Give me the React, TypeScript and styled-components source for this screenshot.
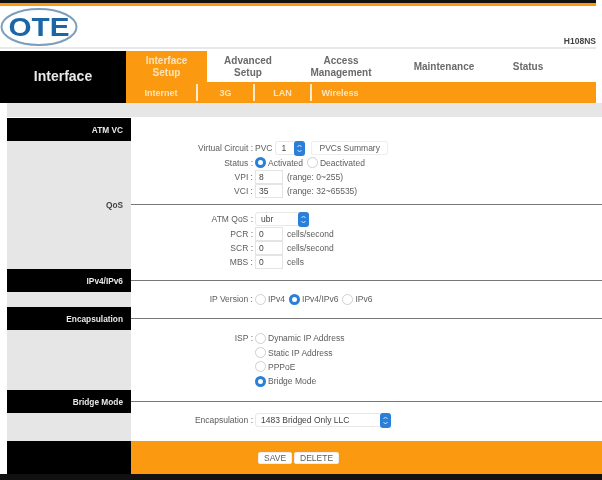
import styled, { createGlobalStyle } from "styled-components";

const GlobalStyle = createGlobalStyle`
  html, body {
    margin: 0;
    padding: 0;
    background: #fff;
  }
`;

const Page = styled.div`
  width: 602px;
  height: 480px;
  overflow: hidden;
  display: flex;
  flex-direction: column;
  font-family: "Liberation Sans", Arial, sans-serif;
  font-size: 8.5px;
  color: #5c5c5c;
  background: #fff;
  filter: blur(0.7px);
`;

const TopStrip = styled.div`
  width: 596px;
  height: 3px;
  background: #111;
  border-bottom: 3px solid #fb9a10;
`;

const Header = styled.div`
  height: 41px;
  display: flex;
  align-items: flex-end;
  justify-content: space-between;
  width: 596px;
  border-bottom: 2px solid #e8e8e8;
`;

const Logo = styled.svg`
  display: block;
  width: 80px;
  height: 40px;
`;

const Model = styled.div`
  font-size: 8.5px;
  font-weight: bold;
  color: #444;
  padding-bottom: 1px;
`;

const Nav = styled.div`
  margin-top: 2px;
  width: 596px;
  height: 52px;
  display: grid;
  grid-template-columns: 126px 1fr;
`;

const NavTitle = styled.div`
  background: #000;
  color: #e8e8e8;
  font-size: 14px;
  font-weight: bold;
  display: flex;
  align-items: center;
  justify-content: center;
  padding-bottom: 2px;
`;

const NavRight = styled.div`
  display: flex;
  flex-direction: column;
`;

const Tabs = styled.div`
  height: 31px;
  display: flex;
`;

const Tab = styled.div<{ $width: number; $active?: boolean }>`
  width: ${(p) => p.$width}px;
  display: flex;
  align-items: center;
  justify-content: center;
  text-align: center;
  line-height: 12px;
  font-size: 10px;
  font-weight: bold;
  color: ${(p) => (p.$active ? "#fde3bb" : "#6a6a6a")};
  background: ${(p) => (p.$active ? "#fb9a10" : "transparent")};
`;

const SubBar = styled.div`
  height: 21px;
  background: #fb9a10;
  display: flex;
  align-items: center;
`;

const SubItem = styled.div<{ $width: number; $sep?: boolean }>`
  box-sizing: border-box;
  width: ${(p) => p.$width}px;
  height: 17px;
  display: flex;
  align-items: center;
  justify-content: center;
  font-size: 9px;
  font-weight: bold;
  color: #fde3bb;
  border-right: ${(p) => (p.$sep ? "2px solid #fde9cc" : "none")};
`;

const GreyStrip = styled.div`
  height: 14px;
  background: #e6e6e6;
  margin-left: 7px;
  margin-bottom: 1px;
`;

const Main = styled.div`
  margin-left: 7px;
  display: flex;
  flex-direction: column;
`;

const Row = styled.div<{ $height: number }>`
  height: ${(p) => p.$height}px;
  display: grid;
  grid-template-columns: 124px 1fr;
`;

const SideHead = styled.div`
  background: #000;
  color: #e8e8e8;
  font-size: 8.3px;
  font-weight: bold;
  display: flex;
  align-items: center;
  justify-content: flex-end;
  padding-right: 8px;
`;

const SideGrey = styled(SideHead)`
  background: #e6e6e6;
  color: #444;
`;

const Rule = styled.div`
  display: flex;
  align-items: center;

  &::after {
    content: "";
    display: block;
    width: 100%;
    height: 1px;
    background: #777;
  }
`;

const Fields = styled.div<{ $top: number }>`
  padding-top: ${(p) => p.$top}px;
  display: flex;
  flex-direction: column;
`;

const Field = styled.div`
  height: 14.4px;
  display: grid;
  grid-template-columns: 124px 1fr;
  align-items: center;
  white-space: nowrap;
`;

const Label = styled.div`
  text-align: right;
  padding-right: 2px;
`;

const Value = styled.div`
  display: flex;
  align-items: center;
  gap: 3px;
`;

const Radio = styled.span<{ $on?: boolean }>`
  box-sizing: border-box;
  width: 11px;
  height: 11px;
  border-radius: 50%;
  flex: none;
  background: #fff;
  border: ${(p) => (p.$on ? "3.5px solid #2a7fd8" : "1px solid #d0d0d0")};
`;

const TextBox = styled.span`
  box-sizing: border-box;
  width: 28px;
  height: 14px;
  border: 1px solid #e4e4e4;
  padding-left: 3px;
  display: flex;
  align-items: center;
  margin-right: 1px;
  color: #444;
`;

const Select = styled.span<{ $width: number }>`
  box-sizing: border-box;
  width: ${(p) => p.$width}px;
  height: 14px;
  border: 1px solid #e8e8e8;
  border-radius: 3px;
  padding-left: 5px;
  display: flex;
  align-items: center;
  justify-content: space-between;
  color: #444;
  background: #fff;
`;

const Stepper = styled.svg`
  display: block;
  flex: none;
  width: 11px;
  height: 15px;
  margin-right: -1px;
`;

const Button = styled.span`
  box-sizing: border-box;
  height: 12px;
  padding: 0 5px;
  border-radius: 2px;
  background: #fff;
  border: 1px solid #eee;
  display: inline-flex;
  align-items: center;
  color: #5c5c5c;
  font-size: 8.5px;
`;

const SummaryButton = styled(Button)`
  height: 14px;
  margin-left: 3px;
  padding: 0 7px;
`;

const RadioGroup = styled.span`
  display: flex;
  align-items: center;
  gap: 2px;
  margin-right: 1px;
`;

const Footer = styled.div`
  height: 33px;
  display: grid;
  grid-template-columns: 124px 1fr;
`;

const FooterBar = styled.div`
  background: #fb9a10;
  display: flex;
  align-items: center;
  gap: 2px;
  padding-left: 127px;
`;

const BottomStrip = styled.div`
  flex: 1;
  background: #111;
`;

function Arrows() {
  return (
    <Stepper viewBox="0 0 11 15">
      <rect width="11" height="15" rx="3" fill="#2a7fd8" />
      <path d="M3.5 6 5.5 4 7.5 6M3.5 9 5.5 11 7.5 9" fill="none" stroke="#d8e9fb" strokeWidth="1" />
    </Stepper>
  );
}

export default function App() {
  return (
    <Page>
      <GlobalStyle />
      <TopStrip />
      <Header>
        <Logo viewBox="0 0 80 40">
          <ellipse cx="39" cy="20" rx="37.5" ry="18" fill="#fff" stroke="#7d9fbd" strokeWidth="2" />
          <text
            x="39"
            y="29"
            textAnchor="middle"
            fontFamily="Liberation Sans"
            fontWeight="bold"
            fontSize="25"
            fill="#1b66a6"
            textLength="61"
            lengthAdjust="spacingAndGlyphs"
          >
            OTE
          </text>
        </Logo>
        <Model>H108NS</Model>
      </Header>
      <Nav>
        <NavTitle>Interface</NavTitle>
        <NavRight>
          <Tabs>
            <Tab $width={81} $active>Interface<br />Setup</Tab>
            <Tab $width={82}>Advanced<br />Setup</Tab>
            <Tab $width={104}>Access<br />Management</Tab>
            <Tab $width={102}>Maintenance</Tab>
            <Tab $width={66}>Status</Tab>
          </Tabs>
          <SubBar>
            <SubItem $width={72} $sep>Internet</SubItem>
            <SubItem $width={57} $sep>3G</SubItem>
            <SubItem $width={57} $sep>LAN</SubItem>
            <SubItem $width={56}>Wireless</SubItem>
          </SubBar>
        </NavRight>
      </Nav>
      <GreyStrip />
      <Main>
        <Row $height={23}>
          <SideHead>ATM VC</SideHead>
          <div />
        </Row>
        <Row $height={56}>
          <SideGrey />
          <Fields $top={0}>
            <Field>
              <Label>Virtual Circuit :</Label>
              <Value>
                PVC
                <Select $width={30}>1<Arrows /></Select>
                <SummaryButton>PVCs Summary</SummaryButton>
              </Value>
            </Field>
            <Field>
              <Label>Status :</Label>
              <Value>
                <RadioGroup><Radio $on />Activated</RadioGroup>
                <RadioGroup><Radio />Deactivated</RadioGroup>
              </Value>
            </Field>
            <Field>
              <Label>VPI :</Label>
              <Value><TextBox>8</TextBox>(range: 0~255)</Value>
            </Field>
            <Field>
              <Label>VCI :</Label>
              <Value><TextBox>35</TextBox>(range: 32~65535)</Value>
            </Field>
          </Fields>
        </Row>
        <Row $height={15}>
          <SideGrey>QoS</SideGrey>
          <Rule />
        </Row>
        <Row $height={57}>
          <SideGrey />
          <Fields $top={0}>
            <Field>
              <Label>ATM QoS :</Label>
              <Value><Select $width={54}>ubr<Arrows /></Select></Value>
            </Field>
            <Field>
              <Label>PCR :</Label>
              <Value><TextBox>0</TextBox>cells/second</Value>
            </Field>
            <Field>
              <Label>SCR :</Label>
              <Value><TextBox>0</TextBox>cells/second</Value>
            </Field>
            <Field>
              <Label>MBS :</Label>
              <Value><TextBox>0</TextBox>cells</Value>
            </Field>
          </Fields>
        </Row>
        <Row $height={23}>
          <SideHead>IPv4/IPv6</SideHead>
          <Rule />
        </Row>
        <Row $height={15}>
          <SideGrey />
          <Fields $top={0}>
            <Field>
              <Label>IP Version :</Label>
              <Value>
                <RadioGroup><Radio />IPv4</RadioGroup>
                <RadioGroup><Radio $on />IPv4/IPv6</RadioGroup>
                <RadioGroup><Radio />IPv6</RadioGroup>
              </Value>
            </Field>
          </Fields>
        </Row>
        <Row $height={23}>
          <SideHead>Encapsulation</SideHead>
          <Rule />
        </Row>
        <Row $height={60}>
          <SideGrey />
          <Fields $top={1}>
            <Field>
              <Label>ISP :</Label>
              <Value><RadioGroup><Radio />Dynamic IP Address</RadioGroup></Value>
            </Field>
            <Field>
              <Label />
              <Value><RadioGroup><Radio />Static IP Address</RadioGroup></Value>
            </Field>
            <Field>
              <Label />
              <Value><RadioGroup><Radio />PPPoE</RadioGroup></Value>
            </Field>
            <Field>
              <Label />
              <Value><RadioGroup><Radio $on />Bridge Mode</RadioGroup></Value>
            </Field>
          </Fields>
        </Row>
        <Row $height={23}>
          <SideHead>Bridge Mode</SideHead>
          <Rule />
        </Row>
        <Row $height={28}>
          <SideGrey />
          <Fields $top={0}>
            <Field>
              <Label>Encapsulation :</Label>
              <Value><Select $width={136}>1483 Bridged Only LLC<Arrows /></Select></Value>
            </Field>
          </Fields>
        </Row>
        <Footer>
          <SideHead />
          <FooterBar>
            <Button>SAVE</Button>
            <Button>DELETE</Button>
          </FooterBar>
        </Footer>
      </Main>
      <BottomStrip />
    </Page>
  );
}
